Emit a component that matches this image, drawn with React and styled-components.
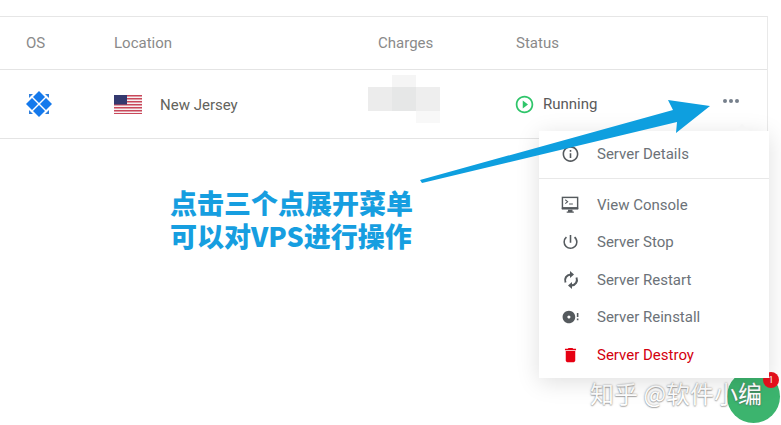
import styled, { createGlobalStyle } from "styled-components";
import {
  MdInfoOutline,
  MdPowerSettingsNew,
  MdDiscFull,
  MdDelete,
  MdPlayCircleOutline,
} from "react-icons/md";

const Global = createGlobalStyle`
  html, body {
    margin: 0;
    background: #fff;
    overflow: hidden;
  }
  body {
    font-family: Roboto, "Liberation Sans", "Noto Sans CJK SC", sans-serif;
  }
`;

const Page = styled.div`
  position: relative;
  width: 781px;
  height: 425px;
  padding-top: 16px;
  box-sizing: border-box;
  overflow: hidden;
`;

const Table = styled.div`
  width: 768px;
  border-top: 1px solid #e6e6e6;
  border-right: 1px solid #e9e9e9;
  box-sizing: border-box;
`;

const Row = styled.div`
  display: grid;
  grid-template-columns: 88px 264px 138px 1fr 52px;
  align-items: center;
  padding-left: 26px;
  height: ${(p) => p.$height}px;
  border-bottom: 1px solid #e4e4e4;
  box-sizing: border-box;
`;

const HeadCell = styled.div`
  font-size: 15px;
  color: #8a8a8a;
`;

const Cell = styled.div`
  display: flex;
  align-items: center;
  font-size: 15px;
  color: #63635c;
`;

const LocationName = styled.span`
  margin-left: 18px;
  margin-top: 1px;
`;

const StatusText = styled.span`
  margin-left: 8px;
  color: #5a5a5a;
`;

const StatusIcon = styled(MdPlayCircleOutline)`
  color: #2fc56a;
  margin-left: -2px;
`;

const Dots = styled.div`
  display: flex;
  gap: 2px;
  margin-left: 8px;
  margin-top: -7px;
`;

const Dot = styled.i`
  display: block;
  width: 4px;
  height: 4px;
  border-radius: 50%;
  background: #76808c;
`;

const Mosaic = styled.svg`
  position: absolute;
  left: 348px;
  top: 75px;
`;

const Menu = styled.div`
  position: absolute;
  left: 539px;
  top: 131px;
  width: 230px;
  height: 247px;
  background: #fff;
  box-shadow: 0 4px 22px rgba(0, 0, 0, 0.13);
  padding-top: 5px;
  box-sizing: border-box;

  &::before {
    content: "";
    position: absolute;
    right: 19px;
    top: -7px;
    border-left: 8px solid transparent;
    border-right: 8px solid transparent;
    border-bottom: 7px solid #f6f6f6;
  }
`;

const MenuItem = styled.div`
  display: flex;
  align-items: center;
  height: ${(p) => p.$height || 37.5}px;
  padding-left: 22px;
  font-size: 15px;
  color: ${(p) => (p.$danger ? "#d3000e" : "#6c7278")};
`;

const IconSlot = styled.span`
  display: flex;
  align-items: center;
  justify-content: center;
  width: 19px;
  height: 20px;
  margin-right: 17px;
  color: ${(p) => (p.$danger ? "#e60012" : "#555a5e")};
`;

const Divider = styled.div`
  height: 1px;
  background: #e8e8e8;
  margin: 7px 0 7px;
`;

const Callout = styled.div`
  position: absolute;
  left: 170px;
  top: 187px;
  font-family: "Noto Sans CJK SC", sans-serif;
  font-size: 27px;
  line-height: 32.5px;
  font-weight: 900;
  color: #169ee0;
`;

const Arrow = styled.svg`
  position: absolute;
  left: 0;
  top: 0;
`;

const ChatBubble = styled.div`
  position: absolute;
  left: 727px;
  top: 370px;
  width: 53px;
  height: 53px;
  border-radius: 50%;
  background: #3cb46e;
`;

const Badge = styled.div`
  position: absolute;
  left: 763px;
  top: 372px;
  width: 16px;
  height: 16px;
  border-radius: 50%;
  background: #e8101c;
  color: #fff;
  font-size: 9px;
  line-height: 16px;
  text-align: center;
`;

const Watermark = styled.div`
  position: absolute;
  left: 590px;
  top: 376px;
  font-family: "Noto Sans CJK SC", sans-serif;
  font-size: 24px;
  line-height: 34px;
  color: #fff;
  text-shadow: 0 0 2px rgba(90, 90, 90, 0.7), 0 1px 1px rgba(90, 90, 90, 0.4);
  white-space: nowrap;
`;

function OsLogo() {
  return (
    <svg width="26" height="26" viewBox="0 0 26 26" style={{ display: "block" }}>
      <g fill="#1479ec">
        <path d="M13 0 19 6 13 12 7 6z" />
        <path d="M13 14 19 20 13 26 7 20z" />
        <path d="M6 7 12 13 6 19 0 13z" />
        <path d="M20 7 26 13 20 19 14 13z" />
      </g>
      <g fill="#2f7fdc">
        <path d="M3 3h4L3 7z" />
        <path d="M23 3h-4L23 7z" />
        <path d="M3 23h4L3 19z" />
        <path d="M23 23h-4L23 19z" />
      </g>
    </svg>
  );
}

function UsFlag() {
  const stripes = [0, 1, 2, 3, 4, 5, 6];
  return (
    <svg width="28" height="19" viewBox="0 0 28 19" style={{ display: "block" }}>
      <rect width="28" height="19" fill="#f6f1f2" />
      {stripes.map((i) => (
        <rect key={i} y={i * 3} width="28" height="1.500" fill="#c9485a" />
      ))}
      <rect y="0" width="13" height="9.500" fill="#34396f" />
    </svg>
  );
}

function ConsoleIcon() {
  return (
    <svg width="20" height="18" viewBox="0 0 20 18" fill="none" stroke="currentColor">
      <rect x="1.500" y="1" width="16" height="11" strokeWidth="1.500" />
      <path d="M4.500 3.500 7 5.500 4.500 7.500M8.500 8h4" strokeWidth="1.100" />
      <path d="M1 12h17v1.500H1z" fill="currentColor" strokeWidth=".5" />
      <path d="M6 16.500h7.500M8 14v2h3.500v-2" fill="currentColor" strokeWidth="1.200" />
    </svg>
  );
}

function RestartIcon() {
  return (
    <svg width="16" height="18" viewBox="0 0 16 18" fill="none" stroke="currentColor" strokeWidth="2">
      <path d="M2.500 11.500C1 7.500 3.500 3.800 7.500 3.500" />
      <path d="M13.500 6.500C15 10.500 12.500 14.200 8.500 14.500" />
      <path d="M7 0 11 3.500 7 7z" fill="currentColor" stroke="none" />
      <path d="M9 18 5 14.500 9 11z" fill="currentColor" stroke="none" />
    </svg>
  );
}

const MENU = [
  { label: "View Console", icon: <ConsoleIcon /> },
  { label: "Server Stop", icon: <MdPowerSettingsNew size={20} /> },
  { label: "Server Restart", icon: <RestartIcon /> },
  { label: "Server Reinstall", icon: <MdDiscFull size={20} /> },
  { label: "Server Destroy", icon: <MdDelete size={20} />, danger: true },
];

export default function App() {
  return (
    <Page>
      <Global />
      <Table>
        <Row $height={53}>
          <HeadCell>OS</HeadCell>
          <HeadCell>Location</HeadCell>
          <HeadCell>Charges</HeadCell>
          <HeadCell>Status</HeadCell>
        </Row>
        <Row $height={69}>
          <Cell>
            <OsLogo />
          </Cell>
          <Cell>
            <UsFlag />
            <LocationName>New Jersey</LocationName>
          </Cell>
          <Cell />
          <Cell>
            <StatusIcon size={21} />
            <StatusText>Running</StatusText>
          </Cell>
          <Cell>
            <Dots>
              <Dot />
              <Dot />
              <Dot />
            </Dots>
          </Cell>
        </Row>
      </Table>

      <Mosaic width="92" height="50" viewBox="0 0 92 50">
        <rect x="20" y="12" width="24" height="24" fill="#ececec" />
        <rect x="44" y="0" width="24" height="12" fill="#f5f5f5" />
        <rect x="44" y="12" width="24" height="24" fill="#e6e7e7" />
        <rect x="68" y="12" width="24" height="24" fill="#eeeeee" />
        <rect x="68" y="36" width="24" height="12" fill="#f8f8f8" />
      </Mosaic>

      <ChatBubble />
      <Watermark>知乎 @软件小编</Watermark>
      <Badge>1</Badge>

      <Menu>
        <MenuItem $height={35}>
          <IconSlot>
            <MdInfoOutline size={20} />
          </IconSlot>
          Server Details
        </MenuItem>
        <Divider />
        {MENU.map((item) => (
          <MenuItem key={item.label} $danger={item.danger}>
            <IconSlot $danger={item.danger}>{item.icon}</IconSlot>
            {item.label}
          </MenuItem>
        ))}
      </Menu>

      <Callout>
        点击三个点展开菜单
        <br />
        可以对VPS进行操作
      </Callout>

      <Arrow width="781" height="425" viewBox="0 0 781 425">
        <path d="M420 180 L673 110 L668 100 L710 106 L676 133 L677 122 L422 183 Z" fill="#0e9fdf" />
      </Arrow>
    </Page>
  );
}
